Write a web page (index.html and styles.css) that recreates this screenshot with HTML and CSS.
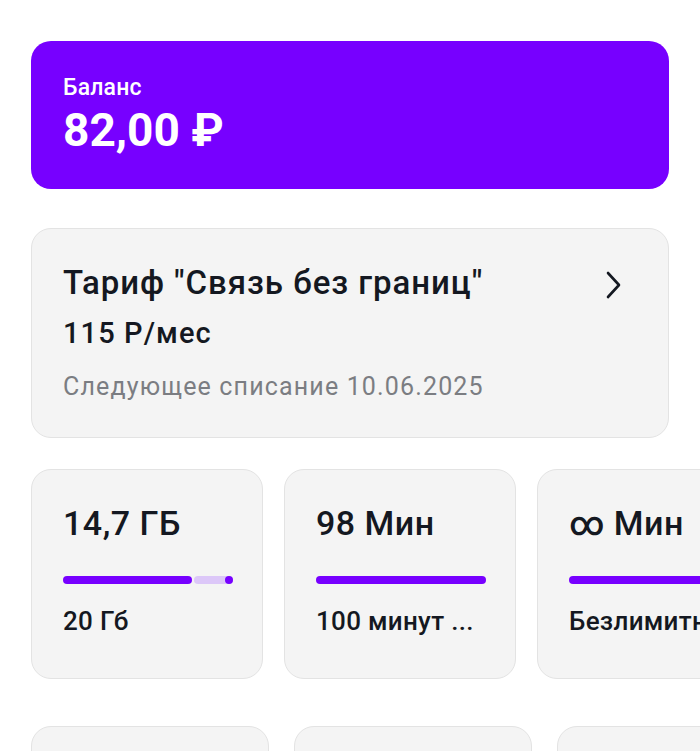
FILE: index.html
```html
<!DOCTYPE html>
<html lang="ru">
<head>
<meta charset="utf-8">
<link rel="stylesheet" href="styles.css">
</head>
<body>
<div class="page">
  <section class="balance">
    <div class="balance-label">Баланс</div>
    <div class="balance-value">82,00 ₽</div>
  </section>

  <section class="tariff">
    <div class="tariff-head">
      <div class="tariff-title">Тариф "Связь без границ"</div>
      <svg class="chevron" width="20" height="30" viewBox="0 0 20 30"><path d="M5 3 L16 15 L5 27" fill="none" stroke="#141821" stroke-width="2.6" stroke-linecap="round" stroke-linejoin="round"/></svg>
    </div>
    <div class="tariff-price">115 Р/мес</div>
    <div class="tariff-next">Следующее списание 10.06.2025</div>
  </section>

  <div class="row">
    <div class="stat">
      <div class="stat-value">14,7 ГБ</div>
      <div class="bar">
        <div class="bar-fill" style="width:129px"></div>
        <div class="bar-rest"><span class="bar-dot"></span></div>
      </div>
      <div class="stat-label">20 Гб</div>
    </div>
    <div class="stat">
      <div class="stat-value">98 Мин</div>
      <div class="bar">
        <div class="bar-fill full"></div>
      </div>
      <div class="stat-label">100 минут ...</div>
    </div>
    <div class="stat">
      <div class="stat-value">∞ Мин</div>
      <div class="bar">
        <div class="bar-fill full"></div>
      </div>
      <div class="stat-label">Безлимитные</div>
    </div>
  </div>

  <div class="row row-bottom">
    <div class="tile"></div>
    <div class="tile"></div>
    <div class="tile"></div>
  </div>
</div>
</body>
</html>
```

FILE: styles.css
```css
* { box-sizing: border-box; }
html, body {
  margin: 0;
  padding: 0;
  background: #ffffff;
  overflow: hidden;
}
body {
  font-family: Roboto, "Noto Sans", sans-serif;
  color: #141821;
  width: 700px;
  height: 751px;
}
.page {
  padding: 41px 31px 0 31px;
}
.balance {
  background: #7700ff;
  border-radius: 20px;
  height: 148px;
  padding: 33px 32px 0 32px;
  color: #ffffff;
}
.balance-label {
  font-size: 23px;
  line-height: 27px;
  font-weight: 500;
  letter-spacing: 0.2px;
}
.balance-value {
  font-size: 46px;
  line-height: 54px;
  font-weight: 700;
  margin-top: 2px;
}
.tariff {
  margin-top: 39px;
  height: 210px;
  background: #f4f4f4;
  border: 1.5px solid #e3e3e3;
  border-radius: 20px;
  padding: 35px 31px 0 31px;
}
.tariff-head {
  display: flex;
  align-items: center;
  justify-content: space-between;
}
.tariff-title {
  font-size: 33px;
  line-height: 38px;
  font-weight: 500;
  letter-spacing: 0.95px;
}
.chevron {
  margin-right: 14px;
  margin-top: 3px;
  display: block;
}
.tariff-price {
  margin-top: 14px;
  font-size: 29px;
  line-height: 34px;
  font-weight: 500;
  letter-spacing: 1.1px;
}
.tariff-next {
  margin-top: 22px;
  font-size: 25px;
  line-height: 30px;
  letter-spacing: 1.15px;
  color: #7b7d82;
}
.row {
  margin-top: 31px;
  display: flex;
  gap: 21px;
  width: 900px;
}
.stat {
  flex: 0 0 232px;
  height: 210px;
  background: #f4f4f4;
  border: 1.5px solid #e3e3e3;
  border-radius: 20px;
  padding: 33px 30px 0 31px;
  overflow: hidden;
}
.stat-value {
  font-size: 34px;
  line-height: 40px;
  font-weight: 500;
  letter-spacing: 0.5px;
  white-space: nowrap;
}
.bar {
  margin-top: 33px;
  width: 170px;
  height: 8px;
  display: flex;
  gap: 2px;
}
.bar-fill {
  height: 8px;
  background: #7700ff;
  border-radius: 4px;
}
.bar-fill.full { width: 170px; }
.bar-rest {
  flex: 1;
  height: 8px;
  background: #dcc7f8;
  border-radius: 4px;
  position: relative;
}
.bar-dot {
  position: absolute;
  right: 0;
  top: 0;
  width: 8px;
  height: 8px;
  border-radius: 50%;
  background: #7700ff;
}
.stat-label {
  margin-top: 21px;
  font-size: 26px;
  line-height: 32px;
  font-weight: 500;
  letter-spacing: 0.3px;
  white-space: nowrap;
}
.row-bottom {
  margin-top: 47px;
  gap: 25px;
}
.tile {
  flex: 0 0 238px;
  height: 120px;
  background: #f4f4f4;
  border: 1.5px solid #e3e3e3;
  border-radius: 20px;
}
```
